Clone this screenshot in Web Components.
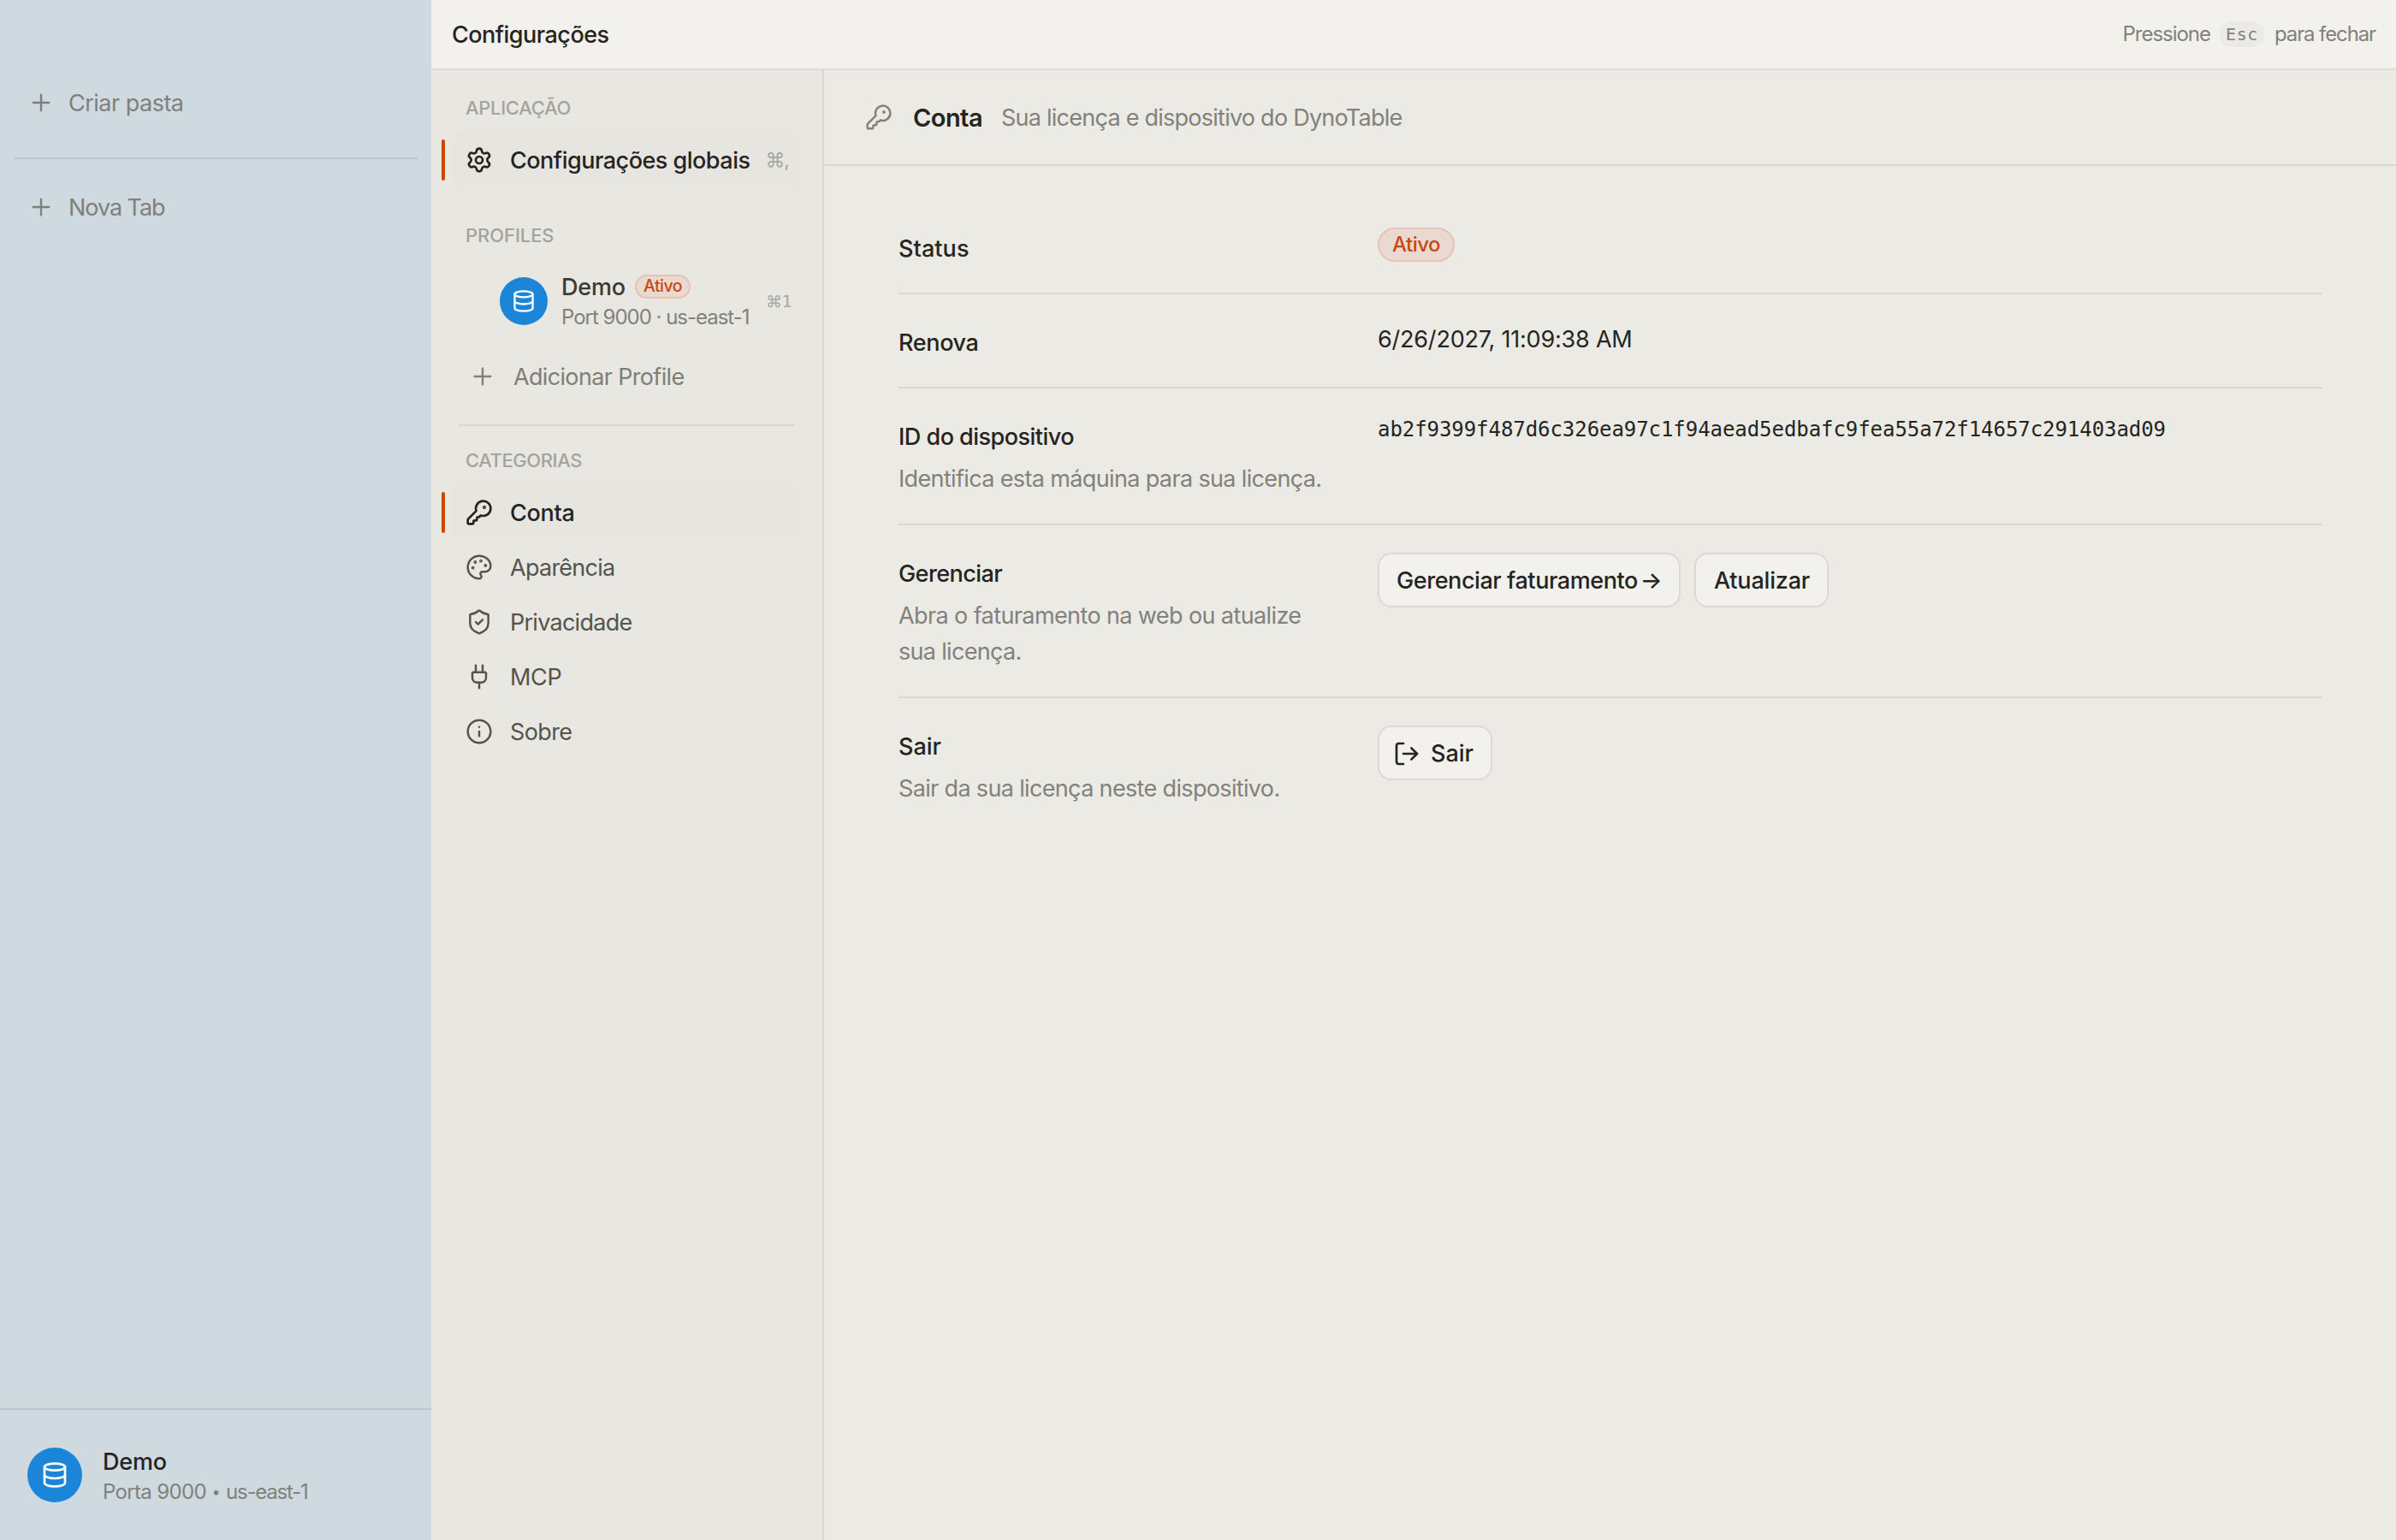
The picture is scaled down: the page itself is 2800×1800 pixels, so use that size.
<!DOCTYPE html>
<html lang="pt-BR">
<head>
<meta charset="utf-8">
<title>Configurações</title>
<style>
html,body{margin:0;height:100%;}
body{
    --ink:#252420;--muted:#82817b;--line:#d8d7d3;--accent:#c9480d;
    font-family:Inter,"Liberation Sans",sans-serif;font-size:27px;color:var(--ink);
    background:#ebeae5;overflow:hidden;
}
</style>
</head>
<body>
<app-shell></app-shell>
<script>
const ICONS = {
    plus: '<path d="M5 12h14M12 5v14"/>',
    database: '<ellipse cx="12" cy="5" rx="9" ry="3"/><path d="M3 5v14a9 3 0 0 0 18 0V5"/><path d="M3 12a9 3 0 0 0 18 0"/>',
    settings: '<path d="M9.671 4.136a2.34 2.34 0 0 1 4.659 0 2.34 2.34 0 0 0 3.319 1.915 2.34 2.34 0 0 1 2.33 4.033 2.34 2.34 0 0 0 0 3.831 2.34 2.34 0 0 1-2.33 4.033 2.34 2.34 0 0 0-3.319 1.915 2.34 2.34 0 0 1-4.659 0 2.34 2.34 0 0 0-3.32-1.915 2.34 2.34 0 0 1-2.33-4.033 2.34 2.34 0 0 0 0-3.831A2.34 2.34 0 0 1 6.35 6.051a2.34 2.34 0 0 0 3.319-1.915"/><circle cx="12" cy="12" r="3"/>',
    key: '<path d="M2.586 17.414A2 2 0 0 0 2 18.828V21a1 1 0 0 0 1 1h3a1 1 0 0 0 1-1v-1a1 1 0 0 1 1-1h1a1 1 0 0 0 1-1v-1a1 1 0 0 1 1-1h.172a2 2 0 0 0 1.414-.586l.814-.814a6.5 6.5 0 1 0-4-4z"/><circle cx="16.5" cy="7.5" r=".5" fill="currentColor"/>',
    palette: '<path d="M12 22a1 1 0 0 1 0-20 10 9 0 0 1 10 9 5 5 0 0 1-5 5h-2.25a1.75 1.75 0 0 0-1.4 2.8l.3.4a1.75 1.75 0 0 1-1.4 2.8z"/><circle cx="13.5" cy="6.5" r=".5" fill="currentColor"/><circle cx="17.5" cy="10.5" r=".5" fill="currentColor"/><circle cx="6.5" cy="12.5" r=".5" fill="currentColor"/><circle cx="8.5" cy="7.5" r=".5" fill="currentColor"/>',
    shield: '<path d="M20 13c0 5-3.5 7.5-7.66 8.95a1 1 0 0 1-.67-.01C7.5 20.5 4 18 4 13V6a1 1 0 0 1 1-1c2 0 4.5-1.2 6.24-2.72a1.17 1.17 0 0 1 1.52 0C14.51 3.81 17 5 19 5a1 1 0 0 1 1 1z"/><path d="m9 12 2 2 4-4"/>',
    plug: '<path d="M12 22v-5"/><path d="M15 8V2"/><path d="M17 8a1 1 0 0 1 1 1v4a4 4 0 0 1-4 4h-4a4 4 0 0 1-4-4V9a1 1 0 0 1 1-1z"/><path d="M9 8V2"/>',
    info: '<circle cx="12" cy="12" r="10"/><path d="M12 16v-4"/><path d="M12 8h.01"/>',
    logout: '<path d="m16 17 5-5-5-5"/><path d="M21 12H9"/><path d="M9 21H5a2 2 0 0 1-2-2V5a2 2 0 0 1 2-2h4"/>'
};

class UiIcon extends HTMLElement {
    connectedCallback() {
        let size = this.getAttribute('size') || 32;
        let stroke = this.getAttribute('stroke') || 1.85;
        this.attachShadow({mode: 'open'}).innerHTML = `<style>
:host{display:block;flex:none;width:${size}px;height:${size}px;}
svg{display:block;width:100%;height:100%;fill:none;stroke:currentColor;stroke-width:${stroke};stroke-linecap:round;stroke-linejoin:round;}
</style><svg viewBox="0 0 24 24">${ICONS[this.getAttribute('name')]}</svg>`;
    }
}

// One line of text. "w" is its advance width: the tracking is adjusted until the line has it.
class UiText extends HTMLElement {
    connectedCallback() {
        this.attachShadow({mode: 'open'}).innerHTML = `<style>
:host{display:block;flex:none;white-space:pre;}
span{display:inline-block;}
</style><span><slot></slot></span>`;
        this.fit();
    }
    fit() {
        let w = parseFloat(this.getAttribute('w'));
        let n = this.textContent.length;
        if (!w || n < 2) return;
        let natural = this.shadowRoot.querySelector('span').getBoundingClientRect().width;
        this.style.letterSpacing = ((w - natural) / n).toFixed(3) + 'px';
    }
}

class UiAvatar extends HTMLElement {
    connectedCallback() {
        let size = +this.getAttribute('size');
        this.attachShadow({mode: 'open'}).innerHTML = `<style>
:host{display:flex;flex:none;align-items:center;justify-content:center;width:${size}px;height:${size}px;border-radius:50%;background:#1b86d8;color:#fff;}
</style><ui-icon name="database" size="${size / 2}" stroke="2"></ui-icon>`;
    }
}

class UiBadge extends HTMLElement {
    connectedCallback() {
        this.attachShadow({mode: 'open'}).innerHTML = `<style>
:host{box-sizing:border-box;display:flex;align-items:center;justify-content:center;width:90px;height:40px;border:2px solid #e5c3b6;border-radius:20px;background:#ead9d1;color:var(--accent);font-size:24px;font-weight:500;line-height:1;}
:host([small]){width:65px;height:28px;font-size:19.5px;}
</style><slot></slot>`;
    }
}

class UiButton extends HTMLElement {
    connectedCallback() {
        this.attachShadow({mode: 'open'}).innerHTML = `<style>
:host{box-sizing:border-box;display:flex;align-items:center;height:64px;padding:1px 20px 0;border:2px solid #dad9d5;border-radius:16px;background:#f2f1ed;font-weight:500;}
</style><slot></slot>`;
    }
}

class SideAction extends HTMLElement {
    connectedCallback() {
        this.attachShadow({mode: 'open'}).innerHTML = `<style>
:host{display:flex;align-items:center;gap:16px;height:64px;padding-left:32px;color:#7f8079;}
</style><ui-icon name="plus" stroke="1.75"></ui-icon><slot></slot>`;
    }
}

class AppSidebar extends HTMLElement {
    connectedCallback() {
        this.attachShadow({mode: 'open'}).innerHTML = `<style>
:host{box-sizing:border-box;display:flex;flex-direction:column;padding-top:88px;background:#cfd9e0;}
hr{height:2px;margin:32px 16px 24px;border:0;background:#bcc8d1;}
footer{box-sizing:border-box;display:flex;align-items:center;gap:24px;height:154px;margin-top:auto;padding-left:32px;border-top:2px solid #bcc8d1;}
.name{line-height:36px;padding-top:3px;font-weight:500;}
.meta{display:flex;font-size:24px;line-height:34px;color:#80817b;}
.dot{width:23px;text-align:center;font-size:18px;}
</style>
<side-action><ui-text w="134.5">Criar pasta</ui-text></side-action>
<hr>
<side-action><ui-text w="112.5">Nova Tab</ui-text></side-action>
<footer>
    <ui-avatar size="64"></ui-avatar>
    <div>
        <ui-text class="name" w="75">Demo</ui-text>
        <div class="meta"><ui-text w="121">Porta 9000</ui-text><ui-text class="dot">•</ui-text><ui-text w="95.5">us-east-1</ui-text></div>
    </div>
</footer>`;
    }
}

class AppHeader extends HTMLElement {
    connectedCallback() {
        this.attachShadow({mode: 'open'}).innerHTML = `<style>
:host{box-sizing:border-box;display:flex;align-items:center;justify-content:space-between;height:82px;padding:0 24px;border-bottom:2px solid #dddcd8;background:#f2f1ed;}
.title{font-weight:500;}
.hint{display:flex;align-items:center;font-size:24px;line-height:30px;color:var(--muted);padding-bottom:1px;}
kbd{box-sizing:border-box;width:52px;height:30px;margin:0 12px 0 11px;padding-left:7px;border-radius:14px;background:#ebeae6;font:20px/30px "DejaVu Sans Mono",monospace;}
</style>
<ui-text class="title" w="183.5">Configurações</ui-text>
<div class="hint"><ui-text w="102.5">Pressione</ui-text><kbd><ui-text w="38">Esc</ui-text></kbd><ui-text w="118">para fechar</ui-text></div>`;
    }
}

class NavItem extends HTMLElement {
    connectedCallback() {
        let icon = this.getAttribute('icon');
        this.attachShadow({mode: 'open'}).innerHTML = `<style>
:host{display:flex;align-items:center;gap:8px;height:64px;color:#54534d;}
:host([active]){color:var(--ink);font-weight:500;}
.bar{width:4px;height:48px;border-radius:2px;}
:host([active]) .bar{background:#cf4707;}
.row{box-sizing:border-box;flex:1;display:flex;align-items:center;gap:20px;height:100%;padding-left:16px;border-radius:12px;}
:host([active]) .row{background:#e6e5e0;}
</style>
<i class="bar"></i><div class="row"><ui-icon name="${icon}" stroke="${this.hasAttribute('active') ? 2 : 1.85}"></ui-icon><slot></slot></div>`;
    }
}

class SettingsNav extends HTMLElement {
    connectedCallback() {
        this.attachShadow({mode: 'open'}).innerHTML = `<style>
:host{box-sizing:border-box;display:flex;flex-direction:column;padding:28px 25px 0 12px;border-right:2px solid var(--line);background:#e8e7e2;}
.heading{margin:0 0 13px 28px;font-size:22px;line-height:32px;font-weight:500;color:#a4a39d;}
.keys{color:#a9a8a2;font-weight:400;font-size:23px;}
.keys.mono{margin-left:-1px;font-family:"DejaVu Sans Mono",monospace;font-size:20px;}
.mono span{font-family:Inter,sans-serif;font-size:19px;}
.profile{display:flex;align-items:center;height:80px;margin:8px 0 16px;padding-left:68px;}
.who{width:240px;margin:2px 0 0 16px;}
.name{display:flex;align-items:center;gap:11px;height:36px;color:#3a3935;font-weight:500;}
.meta{font-size:24px;line-height:36px;color:var(--muted);}
.add{display:flex;align-items:center;gap:20px;height:64px;padding-left:32px;color:#7f7e78;}
hr{width:393px;height:2px;margin:24px 0 24px 20px;border:0;background:#d9d8d4;}
</style>
<ui-text class="heading" w="123">APLICAÇÃO</ui-text>
<nav-item icon="settings" active><ui-text w="280.5">Configurações globais</ui-text><ui-text class="keys" w="27" style="margin-left:-2px">⌘,</ui-text></nav-item>
<ui-text class="heading" style="margin-top:40px" w="103.5">PROFILES</ui-text>
<div class="profile">
    <ui-avatar size="56"></ui-avatar>
    <div class="who">
        <div class="name"><ui-text w="75">Demo</ui-text><ui-badge small><ui-text w="45">Ativo</ui-text></ui-badge></div>
        <ui-text class="meta" w="219.5">Port 9000 · us-east-1</ui-text>
    </div>
    <ui-text class="keys mono" w="30"><span>⌘</span>1</ui-text>
</div>
<div class="add"><ui-icon name="plus" stroke="1.75"></ui-icon><ui-text w="199.5">Adicionar Profile</ui-text></div>
<hr>
<ui-text class="heading" w="136">CATEGORIAS</ui-text>
<nav-item icon="key" active><ui-text w="75.5">Conta</ui-text></nav-item>
<nav-item icon="palette"><ui-text w="122.5">Aparência</ui-text></nav-item>
<nav-item icon="shield"><ui-text w="142.5">Privacidade</ui-text></nav-item>
<nav-item icon="plug"><ui-text w="60.5">MCP</ui-text></nav-item>
<nav-item icon="info"><ui-text w="72.5">Sobre</ui-text></nav-item>`;
    }
}

class SettingRow extends HTMLElement {
    connectedCallback() {
        this.attachShadow({mode: 'open'}).innerHTML = `<style>
:host{display:grid;grid-template-columns:560px 1fr;padding:32px 0;border-bottom:2px solid var(--line);}
:host(:last-child){border-bottom:0;}
.label{margin-top:4px;padding-top:1px;line-height:39px;font-weight:500;}
.desc{line-height:42px;color:var(--muted);}
.value{display:flex;align-items:flex-start;gap:16px;height:40px;line-height:40px;}
</style>
<div><div class="label"><slot name="label"></slot></div><div class="desc"><slot name="desc"></slot></div></div>
<div class="value"><slot></slot></div>`;
    }
}

class AccountPage extends HTMLElement {
    connectedCallback() {
        this.attachShadow({mode: 'open'}).innerHTML = `<style>
:host{display:block;background:#ebeae5;}
header{display:flex;align-items:center;height:110px;padding-left:48px;border-bottom:2px solid var(--line);color:var(--muted);}
.title{margin:0 22px 0 24px;color:var(--ink);font-size:29px;font-weight:600;}
main{padding:40px 86px 0 87px;}
.first{margin-top:9px;}
.last{margin-bottom:-1px;}
.date{padding-top:1px;}
.id{font:24px/32px "DejaVu Sans Mono","Liberation Mono",monospace;}
.exit{margin-left:12px;}
.bill span{margin-left:-4px;}
</style>
<header>
    <ui-icon name="key"></ui-icon>
    <ui-text class="title" w="81">Conta</ui-text>
    <ui-text w="468.5">Sua licença e dispositivo do DynoTable</ui-text>
</header>
<main>
    <setting-row><ui-text slot="label" w="82.5">Status</ui-text><ui-badge><ui-text w="56">Ativo</ui-text></ui-badge></setting-row>
    <setting-row><ui-text slot="label" w="93.5">Renova</ui-text><ui-text class="date" w="297.5">6/26/2027, 11:09:38 AM</ui-text></setting-row>
    <setting-row><ui-text slot="label" w="205">ID do dispositivo</ui-text>
        <ui-text slot="desc" class="first last" w="494.5">Identifica esta máquina para sua licença.</ui-text>
        <ui-text class="id" w="921">ab2f9399f487d6c326ea97c1f94aead5edbafc9fea55a72f14657c291403ad09</ui-text></setting-row>
    <setting-row><ui-text slot="label" w="121">Gerenciar</ui-text>
        <ui-text slot="desc" class="first" w="470.5">Abra o faturamento na web ou atualize</ui-text>
        <ui-text slot="desc" class="last" w="143.5">sua licença.</ui-text>
        <ui-button><ui-text class="bill" w="310">Gerenciar faturamento <span>→</span></ui-text></ui-button>
        <ui-button style="padding-left:21px"><ui-text w="112">Atualizar</ui-text></ui-button></setting-row>
    <setting-row><ui-text slot="label" w="50">Sair</ui-text>
        <ui-text slot="desc" class="first" w="445.5">Sair da sua licença neste dispositivo.</ui-text>
        <ui-button><ui-icon name="logout" stroke="2" style="margin-left:-4px"></ui-icon><ui-text class="exit" w="50">Sair</ui-text></ui-button></setting-row>
</main>`;
    }
}

class AppShell extends HTMLElement {
    connectedCallback() {
        this.attachShadow({mode: 'open'}).innerHTML = `<style>
:host{display:grid;grid-template:82px 1fr/504px 459px 1fr;height:100vh;}
app-sidebar{grid-row:1/3;}
app-header{grid-column:2/4;}
</style>
<app-sidebar></app-sidebar>
<app-header></app-header>
<settings-nav></settings-nav>
<account-page></account-page>`;
    }
}

window.customElements.define('ui-icon', UiIcon);
window.customElements.define('ui-text', UiText);
window.customElements.define('ui-avatar', UiAvatar);
window.customElements.define('ui-badge', UiBadge);
window.customElements.define('ui-button', UiButton);
window.customElements.define('side-action', SideAction);
window.customElements.define('nav-item', NavItem);
window.customElements.define('setting-row', SettingRow);
window.customElements.define('app-sidebar', AppSidebar);
window.customElements.define('app-header', AppHeader);
window.customElements.define('settings-nav', SettingsNav);
window.customElements.define('account-page', AccountPage);
window.customElements.define('app-shell', AppShell);
</script>
</body>
</html>
